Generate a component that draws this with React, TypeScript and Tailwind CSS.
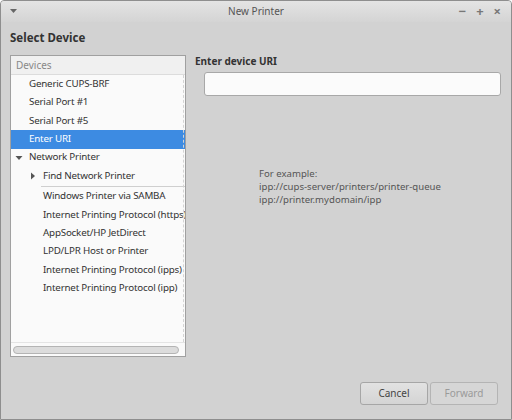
const font = { fontFamily: '"Noto Sans", "Open Sans", sans-serif' }

function Tri({ dir }: { dir: 'down' | 'right' }) {
  return (
    <svg width="8" height="8" viewBox="0 0 8 8" className="shrink-0">
      {dir === 'down' ? (
        <path d="M0.5 2 L7.5 2 L4 6 Z" fill="#555" />
      ) : (
        <path d="M2 0.5 L6 4 L2 7.5 Z" fill="#555" />
      )}
    </svg>
  )
}

function Row({
  label,
  indent,
  selected,
  tri,
}: {
  label: string
  indent: string
  selected?: boolean
  tri?: 'down' | 'right'
}) {
  return (
    <div
      className={`h-[18.4px] flex items-center whitespace-nowrap ${indent} ${
        selected ? 'bg-[#3d8be2] text-white' : 'text-[#333]'
      }`}
    >
      {tri && (
        <span className="w-[14px] flex items-center">
          <Tri dir={tri} />
        </span>
      )}
      <span>{label}</span>
    </div>
  )
}

export default function App() {
  const devices = [
    'Windows Printer via SAMBA',
    'Internet Printing Protocol (https)',
    'AppSocket/HP JetDirect',
    'LPD/LPR Host or Printer',
    'Internet Printing Protocol (ipps)',
    'Internet Printing Protocol (ipp)',
  ]

  return (
    <div
      className="w-[512px] h-[420px] bg-[#d2d2d2] border border-[#8e8e8e] rounded-t-[4px] flex flex-col overflow-hidden text-[10px]"
      style={font}
    >
      {/* title bar */}
      <div className="h-[21px] shrink-0 flex items-center bg-gradient-to-b from-[#e4e4e4] to-[#d4d4d4] px-[9px]">
        <div className="w-[60px]">
          <svg width="7" height="5" viewBox="0 0 7 5">
            <path d="M0 0 L7 0 L3.5 4 Z" fill="#666" />
          </svg>
        </div>
        <div className="flex-1 text-center text-[10px] text-[#555]">New Printer</div>
        <div className="w-[60px] flex justify-end gap-[10px] text-[#777] text-[13px] font-bold leading-none pr-[1px]">
          <span>−</span>
          <span>+</span>
          <span>×</span>
        </div>
      </div>

      <div className="px-[9px] pt-[8px] text-[11.5px] font-bold text-[#333] leading-[16px]">Select Device</div>

      <div className="flex pt-[9px] pl-[9px] pr-[10px]">
        {/* device list */}
        <div className="w-[176px] h-[302px] shrink-0 border border-[#a0a0a0] bg-[#fafafa] flex flex-col">
          <div className="h-[19px] flex items-center px-[5px] text-[#888] bg-[#f0f0f0] border-b border-[#dcdcdc]">
            Devices
          </div>
          <div className="flex-1 relative overflow-hidden tracking-[-0.2px] text-[9.8px]">
            <div className="absolute right-[1px] top-0 bottom-0 border-r border-dashed border-[#d4d4d4]" />
            <Row label="Generic CUPS-BRF" indent="pl-[18px]" />
            <Row label="Serial Port #1" indent="pl-[18px]" />
            <Row label="Serial Port #5" indent="pl-[18px]" />
            <Row label="Enter URI" indent="pl-[18px]" selected />
            <Row label="Network Printer" indent="pl-[4px]" tri="down" />
            <Row label="Find Network Printer" indent="pl-[18px]" tri="right" />
            <div className="ml-[30px] h-px bg-[#cfcfcf] my-[0.5px]" />
            {devices.map((d, i) => (
              <Row key={i} label={d} indent="pl-[32px]" />
            ))}
          </div>
          <div className="h-[14px] flex items-center px-[2px] border-t border-[#e4e4e4]">
            <div className="h-[8px] w-[166px] rounded-full bg-[#dcdcdc] border border-[#b4b4b4]" />
          </div>
        </div>

        {/* right pane */}
        <div className="flex-1 pl-[9px] flex flex-col">
          <div className="text-[10px] font-bold text-[#333] leading-[14px] -mt-[1px]">Enter device URI</div>
          <div className="mt-[4px] ml-[9px] h-[24px] rounded-[3px] border border-[#a8a8a8] bg-[#fbfbfb]" />
          <div className="mt-[71px] ml-[64px] text-[#555] leading-[13px] text-[9.6px]">
            <div>For example:</div>
            <div>ipp://cups-server/printers/printer-queue</div>
            <div>ipp://printer.mydomain/ipp</div>
          </div>
        </div>
      </div>

      {/* buttons */}
      <div className="flex justify-end gap-[2px] pr-[13px] mt-[25px]">
        <button className="w-[68px] h-[23px] rounded-[3px] border border-[#a6a6a6] bg-gradient-to-b from-[#e2e2e2] to-[#d4d4d4] text-[#444] text-[10px]">
          Cancel
        </button>
        <button className="w-[68px] h-[23px] rounded-[3px] border border-[#b4b4b4] bg-[#d6d6d6] text-[#9a9a9a] text-[10px]">
          Forward
        </button>
      </div>
    </div>
  )
}
